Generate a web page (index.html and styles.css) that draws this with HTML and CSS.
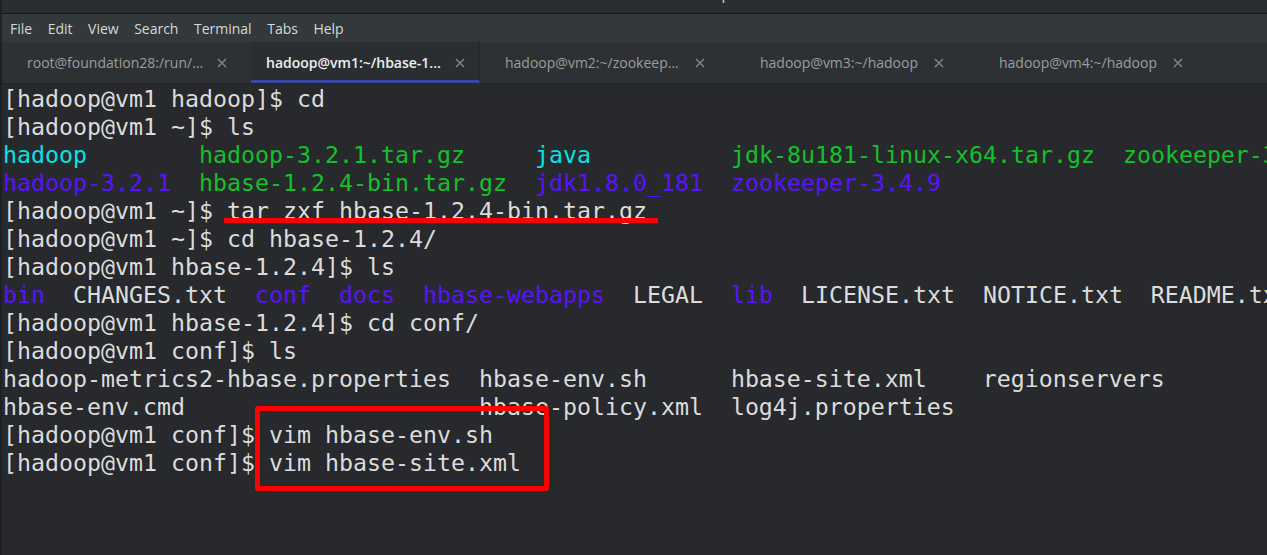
FILE: index.html
```html
<!DOCTYPE html>
<html lang="en">
<head>
    <meta charset="UTF-8">
    <meta name="viewport" content="width=device-width, initial-scale=1.0">
    <title>Terminal</title>
    <link rel="stylesheet" href="styles.css">
</head>
<body>
    <div class="window">
        <div class="titlebar"><span class="title">hbase pc</span></div>
        <div class="menubar">
            <span>File</span>
            <span>Edit</span>
            <span>View</span>
            <span>Search</span>
            <span>Terminal</span>
            <span>Tabs</span>
            <span>Help</span>
        </div>
        <div class="tabbar">
            <div class="tab"><span class="label">root@foundation28:/run/…</span><span class="close"><svg width="10" height="10" viewBox="0 0 10 10"><path d="M1 1L9 9M9 1L1 9"/></svg></span></div>
            <div class="tab active"><span class="label">hadoop@vm1:~/hbase-1.…</span><span class="close"><svg width="10" height="10" viewBox="0 0 10 10"><path d="M1 1L9 9M9 1L1 9"/></svg></span></div>
            <div class="tab"><span class="label">hadoop@vm2:~/zookeep…</span><span class="close"><svg width="10" height="10" viewBox="0 0 10 10"><path d="M1 1L9 9M9 1L1 9"/></svg></span></div>
            <div class="tab fit"><span class="label">hadoop@vm3:~/hadoop</span><span class="close"><svg width="10" height="10" viewBox="0 0 10 10"><path d="M1 1L9 9M9 1L1 9"/></svg></span></div>
            <div class="tab fit"><span class="label">hadoop@vm4:~/hadoop</span><span class="close"><svg width="10" height="10" viewBox="0 0 10 10"><path d="M1 1L9 9M9 1L1 9"/></svg></span></div>
        </div>
        <div class="term">
<pre class="screen">[hadoop@vm1 hadoop]$ cd
[hadoop@vm1 ~]$ ls
<span class="c">hadoop</span>        <span class="g">hadoop-3.2.1.tar.gz</span>     <span class="c">java</span>          <span class="g">jdk-8u181-linux-x64.tar.gz</span>  <span class="g">zookeeper-3.4.9.tar.gz</span>
<span class="b">hadoop-3.2.1</span>  <span class="g">hbase-1.2.4-bin.tar.gz</span>  <span class="b">jdk1.8.0_181</span>  <span class="b">zookeeper-3.4.9</span>
[hadoop@vm1 ~]$ tar zxf hbase-1.2.4-bin.tar.gz
[hadoop@vm1 ~]$ cd hbase-1.2.4/
[hadoop@vm1 hbase-1.2.4]$ ls
<span class="b">bin</span>  CHANGES.txt  <span class="b">conf</span>  <span class="b">docs</span>  <span class="b">hbase-webapps</span>  LEGAL  <span class="b">lib</span>  LICENSE.txt  NOTICE.txt  README.txt
[hadoop@vm1 hbase-1.2.4]$ cd conf/
[hadoop@vm1 conf]$ ls
hadoop-metrics2-hbase.properties  hbase-env.sh      hbase-site.xml    regionservers
hbase-env.cmd                     hbase-policy.xml  log4j.properties
[hadoop@vm1 conf]$ vim hbase-env.sh
[hadoop@vm1 conf]$ vim hbase-site.xml</pre>
            <div class="mark underline"></div>
            <div class="mark box"></div>
        </div>
    </div>
</body>
</html>
```

FILE: styles.css
```css
*{margin: 0; padding: 0; box-sizing: border-box;}
body{
    width: 1267px;
    height: 555px;
    overflow: hidden;
    background-color: #1e2022;
}
.window{
    margin-left: 2px;
    height: 555px;
    display: flex;
    flex-direction: column;
    background-color: #282a2d;
}

/* title bar (cut off at the top) */
.titlebar{
    height: 14px;
    background-color: #2b2e30;
    border-bottom: 1px solid #161718;
    overflow: hidden;
    display: flex;
    justify-content: center;
}
.title{
    font-family: "Open Sans", sans-serif;
    font-size: 15px;
    line-height: 15px;
    color: #d8dadb;
    margin-top: -14px;
    margin-left: 144px;
}

/* menu */
.menubar{
    height: 28px;
    display: flex;
    align-items: center;
    gap: 15.5px;
    padding-left: 8px;
    background-color: #33383a;
    font-family: "Open Sans", sans-serif;
    font-size: 14px;
    color: #d6d8d8;
}

/* tabs */
.tabbar{
    height: 42px;
    display: flex;
    gap: 10px;
    padding-left: 10px;
    background-color: #2d3133;
    border-bottom: 1px solid #222527;
}
.tab{
    width: 229px;
    display: flex;
    align-items: center;
    padding: 0 14px 0 15px;
    font-family: "Open Sans", sans-serif;
    font-size: 14px;
    color: #9a9d9e;
}
.tab.active{
    color: #eeeeec;
    font-weight: 600;
    background-color: #2a2e30;
    border-bottom: 3px solid #3949a3;
    padding-top: 3px;
    border-right: 1px solid #25282a;
}
.tab .label{
    flex: 1;
    white-space: nowrap;
    overflow: hidden;
}
.tab.fit .label{
    text-align: center;
    padding-left: 14px;
}
.close{
    width: 10px;
    height: 10px;
    margin-left: 14px;
    display: flex;
}
.close svg path{
    stroke: #7d8183;
    stroke-width: 1.6;
    fill: none;
}

/* terminal */
.term{
    flex: 1;
    position: relative;
    overflow: hidden;
    background-color: #27292c;
}
.screen{
    padding: 1px 0 0 1px;
    font-family: "DejaVu Sans Mono", monospace;
    font-size: 23.25px;
    line-height: 28px;
    color: #dcdcdc;
    white-space: pre;
}
.c{color: #06e3e6;}
.g{color: #14c12a;}
.b{color: #5a12ff;}

/* red annotations */
.mark{
    position: absolute;
}
.underline{
    left: 222px;
    top: 134px;
    width: 434px;
    height: 5px;
    background-color: #ff0000;
}
.box{
    left: 253px;
    top: 322px;
    width: 294px;
    height: 85px;
    border: 5px solid #ff0000;
    border-radius: 3px;
}
```
